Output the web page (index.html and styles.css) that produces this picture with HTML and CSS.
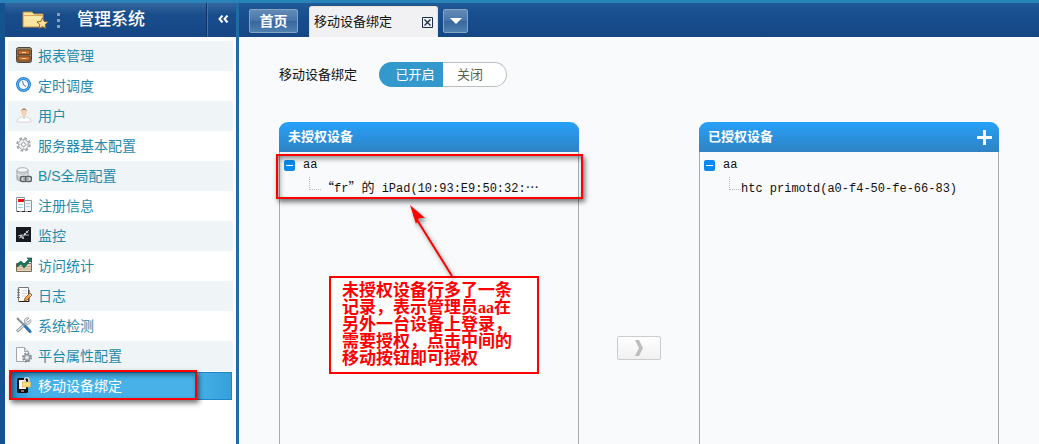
FILE: index.html
```html
<!DOCTYPE html>
<html lang="zh-CN">
<head>
<meta charset="utf-8">
<title>管理系统</title>
<link rel="stylesheet" href="styles.css">
</head>
<body>
<div class="app">
  <aside class="sidebar">
    <header class="brand">
      <svg class="brand-icon" width="28" height="20" viewBox="0 0 28 20" aria-hidden="true">
        <path d="M1 17V2h9l2 2h9v13z" fill="#f8e49c" stroke="#c0894a"/>
        <path d="M1.500 5.500H20.500" stroke="#d9a75c"/>
        <path d="M3 8H19" stroke="#fff3c4"/>
        <path d="M20.500 8l1.700 3.400 3.800.5-2.800 2.700.7 3.900-3.400-1.900-3.400 1.900.7-3.900-2.800-2.700 3.800-.5z" fill="#ffdf93" stroke="#87683b"/>
      </svg>
      <svg class="brand-dots" width="3" height="16" viewBox="0 0 3 16" aria-hidden="true"><path d="M0 1h3v3H0zM0 7h3v3H0zM0 13h3v3H0z" fill="#8d9cb6"/></svg>
      <h1 class="brand-title">管理系统</h1>
      <button class="collapse" type="button" aria-label="收起">
        <svg width="11" height="8" viewBox="0 0 11 8"><path d="M4.500.5L1.500 4l3 3.500M9.500.5L6.500 4l3 3.500" fill="none" stroke="#fff" stroke-width="2"/></svg>
      </button>
    </header>
    <nav class="menu">
      <a class="item" href="#"><svg class="icon" viewBox="0 0 16 16"><rect x=".5" y=".5" width="15" height="15" rx="2" fill="#a08a6c" stroke="#4e4439"/><path d="M2 3h12v4.500H2zM2 9h12v5H2z" fill="#c3702f" stroke="#663d21"/><path d="M6 5.500h4M6 11.500h4" stroke="#f0cf90"/></svg>报表管理</a>
      <a class="item" href="#"><svg class="icon" viewBox="0 0 16 16"><circle cx="7.500" cy="7.500" r="6" fill="#f4faff" stroke="#2683d6" stroke-width="3"/><circle cx="7.500" cy="7.500" r="6" fill="none" stroke="#70bbf3" stroke-width="1"/><path d="M6.500 4l1 4 2.500 1.500" fill="none" stroke="#678"/></svg>定时调度</a>
      <a class="item" href="#"><svg class="icon" viewBox="0 0 16 16"><path d="M1 15c0-3 2-4.500 5-5h4c3 .5 5 2 5 5z" fill="#fff" stroke="#d7d7db"/><ellipse cx="8" cy="5.500" rx="2.700" ry="4" fill="#f2d3b5"/><path d="M5 5C5 0 11 0 11 5L10 3H6z" fill="#a98e78"/><path d="M8 10v2" stroke="#d9b9a2"/></svg>用户</a>
      <a class="item" href="#"><svg class="icon" viewBox="0 0 16 16"><circle cx="7.500" cy="7.500" r="6.300" fill="none" stroke="#a3a8ae" stroke-width="2" stroke-dasharray="2.800 2.140"/><circle cx="7.500" cy="7.500" r="5" fill="#f4f5f6" stroke="#a3a8ae"/><circle cx="7.500" cy="7.500" r="2" fill="#fff" stroke="#969ba1"/><path d="M7.500 3v1.500M7.500 10.500V12M3 7.500h1.500M10.500 7.500H12" stroke="#bbb"/></svg>服务器基本配置</a>
      <a class="item" href="#"><svg class="icon" viewBox="0 0 16 16"><path d="M1 3v9c0 1.500 3 2 5.500 2s5.500-1 5.500-2V3" fill="#c9cdd1" stroke="#969ba0"/><ellipse cx="6.500" cy="3" rx="5.500" ry="2.300" fill="#f5f6f7" stroke="#aaafb3"/><path d="M1 7c2 2 9 2 11 0" fill="none" stroke="#eff2f4"/><rect x="4.500" y="9.500" width="6" height="5" rx="2" fill="#ddd" stroke="#5d6468" stroke-width="1.500"/><rect x="9.500" y="9.500" width="6" height="5" rx="2" fill="#ddd" stroke="#5d6468" stroke-width="1.500"/><path d="M7 12h6" stroke="#777"/></svg>B/S全局配置</a>
      <a class="item" href="#"><svg class="icon" viewBox="0 0 16 16"><path d="M8.500 3.500h7v11h-7z" fill="#eef3f7" stroke="#8b969e"/><path d="M.5.5h8v14h-8z" fill="#fff" stroke="#8b969e"/><path d="M2 2h6v3H2z" fill="#f2140c"/><path d="M2 7.500h5M2 10.500h5M10 6.500h4M10 9.500h4" stroke="#b5cbd8"/><path d="M1 14.500h2M6 14.500h3M12 14.500h3" stroke="#222"/></svg>注册信息</a>
      <a class="item" href="#"><svg class="icon" viewBox="0 0 16 16"><rect width="15" height="15" fill="#161a20"/><path d="M2 9l3-1 3 0 5-5M3 11l3-1 3-2 4 0" fill="none" stroke="#aab0b6"/><path d="M4 9h2M8 7h2M10 5h2M6 11h2" stroke="#dfe3e6" stroke-width="1.500"/></svg>监控</a>
      <a class="item" href="#"><svg class="icon" viewBox="0 0 16 16"><path d="M.5 6.500h15v8H.5z" fill="#e5d5bd" stroke="#7d6a56"/><path d="M1 12h14M1 9.500h14" stroke="#bfa98c"/><path d="M1 10V7l4-3 3 3 5-5-2-1h5v5l-2-2-6 7-3-4z" fill="#187a60" stroke="#1b5745" stroke-width=".7"/></svg>访问统计</a>
      <a class="item" href="#"><svg class="icon" viewBox="0 0 16 16"><path d="M2.500.5h10v14h-10z" fill="#fff" stroke="#777"/><path d="M3 14.500h10V3" fill="none" stroke="#222"/><path d="M1 3h3M1 5.500h3M1 8h3M1 10.500h3" stroke="#777"/><path d="M6 4h5M6 6.500h5M6 9h4" stroke="#cfd3d6"/><path d="M8 14l1-3 5-5 2 2-5 5z" fill="#efa54a" stroke="#8b4c22" stroke-width=".8"/><path d="M13 7l2 2" stroke="#f8dcc0"/></svg>日志</a>
      <a class="item" href="#"><svg class="icon" viewBox="0 0 16 16"><path d="M1 14.500L10 6" stroke="#7f8990" stroke-width="3"/><path d="M1.500 14L10 6" stroke="#e7ebed" stroke-width="1.200"/><path d="M14.500 2.500L12 5l-1.500-1.500L13 1c-3-1-5 1-4.500 4L10 7c3 1 6-1 4.500-4.500z" fill="#e0e4e6" stroke="#8b949a" stroke-width=".8"/><path d="M1 1l8 8" stroke="#868e95" stroke-width="2"/><path d="M9.500 9.500l4.500 5" stroke="#2474ba" stroke-width="3" stroke-linecap="round"/></svg>系统检测</a>
      <a class="item" href="#"><svg class="icon" viewBox="0 0 16 16"><path d="M.5.500h8l4 4v10H.5z" fill="#fafbfc" stroke="#a2a7ab"/><path d="M8.500.5v4h4" fill="#ddd" stroke="#a2a7ab"/><circle cx="11" cy="10.500" r="4" fill="none" stroke="#858d94" stroke-width="2" stroke-dasharray="1.800 1.340"/><circle cx="11" cy="10.500" r="3" fill="#c7ccd1" stroke="#7f878e"/><circle cx="11" cy="10.500" r="1" fill="#fff"/></svg>平台属性配置</a>
      <a class="item item-active" href="#" aria-current="page"><svg class="icon" viewBox="0 0 16 16"><rect x="1" y="1" width="11" height="15" rx="1.500" fill="#111"/><path d="M3 3h7v9H3z" fill="#f5f8fb"/><path d="M5 14h3" stroke="#ddd"/><path d="M8.500 6V3c0-3.300 4.500-3.300 4.500 0v3" fill="none" stroke="#dce0e3" stroke-width="1.500"/><rect x="6.500" y="5" width="8" height="5" fill="#fbdc80" stroke="#d8b458" stroke-width=".7"/></svg>移动设备绑定<span class="mark mark-item"></span></a>
    </nav>
  </aside>

  <main class="main">
    <div class="tabs">
      <button class="tab-home" type="button">首页</button>
      <div class="tab">
        <span>移动设备绑定</span>
        <button class="tab-close" type="button" aria-label="关闭标签">
          <svg width="11" height="11" viewBox="0 0 11 11"><path d="M.5.5h10v10H.5z" fill="none" stroke="#1d2b45"/><path d="M2.500 2.500l6 6M8.500 2.500l-6 6" stroke="#1d2b45" stroke-width="1.300"/></svg>
        </button>
      </div>
      <button class="tab-more" type="button" aria-label="更多标签">
        <svg width="12" height="6" viewBox="0 0 12 6"><path d="M0 0h12L6 6z" fill="#fff"/></svg>
      </button>
    </div>

    <div class="content">
      <div class="setting">
        <span id="bind-label">移动设备绑定</span>
        <div class="switch" role="group" aria-labelledby="bind-label">
          <button class="switch-on" type="button" aria-pressed="true">已开启</button>
          <button class="switch-off" type="button" aria-pressed="false">关闭</button>
        </div>
      </div>

      <div class="columns">
        <section class="panel">
          <header class="panel-head"><h2 class="panel-title">未授权设备</h2></header>
          <div class="tree">
            <div class="node"><button class="fold" type="button" aria-label="折叠"></button>aa</div>
            <div class="leaf"><span class="branch"></span><span><span class="wide">“</span>fr<span class="wide">”的</span> iPad(10:93:E9:50:32:<span class="wide">…</span></span></div>
          </div>
          <span class="mark mark-tree"></span>
          <div class="note">未授权设备行多了一条<br>记录，表示管理员<span class="note-latin">aa</span>在<br>另外一台设备上登录，<br>需要授权，点击中间的<br>移动按钮即可授权</div>
          <svg class="arrow" width="60" height="80" viewBox="0 0 60 80" aria-hidden="true"><path d="M11 15L49 76" stroke="#f00" stroke-width="2"/><path d="M7 5l15 13-6 0-3 6z" fill="#f00"/></svg>
        </section>

        <div class="transfer">
          <button class="move" type="button" aria-label="授权">
            <svg width="9" height="16" viewBox="0 0 9 16"><path d="M0 0h4l4 8-4 8H0l4-8z" fill="#bdbdbd"/></svg>
          </button>
        </div>

        <section class="panel">
          <header class="panel-head">
            <h2 class="panel-title">已授权设备</h2>
            <button class="add" type="button" aria-label="添加设备">
              <svg width="15" height="15" viewBox="0 0 15 15"><path d="M6 0h3v6h6v3H9v6H6V9H0V6h6z" fill="#fff"/></svg>
            </button>
          </header>
          <div class="tree">
            <div class="node"><button class="fold" type="button" aria-label="折叠"></button>aa</div>
            <div class="leaf"><span class="branch"></span>htc primotd(a0-f4-50-fe-66-83)</div>
          </div>
        </section>
      </div>
    </div>
  </main>
</div>
</body>
</html>
```
FILE: styles.css
```css
* { box-sizing: border-box; }

body {
  margin: 0;
  font: 13px/16px "Liberation Sans", "Noto Sans CJK SC", sans-serif;
  color: #111;
  background: #f9fafc;
}

button {
  padding: 0;
  border: 0;
  background: none;
  font: inherit;
  color: inherit;
}

button svg { display: block; }

.app {
  display: flex;
  min-height: 100vh;
  border-top: 3px solid #2a83b8;
}

/* Sidebar */
.sidebar {
  display: flex;
  flex-direction: column;
  flex: 0 0 239px;
  border-left: 5px solid #15538f;
  border-right: 3px solid #206ca4;
  background: #fff;
}

.brand {
  display: flex;
  align-items: center;
  height: 34px;
  padding-left: 17px;
  background: linear-gradient(#34679f, #184d8c 35%, #164684);
  color: #fff;
}

.brand-dots { margin: 0 17px 0 7px; }

.brand-title {
  flex: 1;
  margin: 0;
  font-size: 17px;
  font-weight: 500;
  line-height: 24px;
}

.collapse {
  display: grid;
  place-items: center;
  width: 30px;
  height: 34px;
  padding-left: 4px;
  padding-bottom: 3px;
  border-left: 1px solid #0c3566;
  box-shadow: inset 1px 0 #47739f;
}

.menu { padding: 4px 3px; }

.item {
  position: relative;
  display: flex;
  align-items: center;
  gap: 6px;
  height: 30px;
  padding-left: 8px;
  font-size: 14px;
  color: #248aac;
  text-decoration: none;
}

.item:nth-child(odd) { background: #eff4f7; }

.icon {
  width: 16px;
  height: 16px;
  margin-bottom: 2px;
}

.item.item-active {
  height: 28px;
  margin: 1px 1px 0;
  padding-left: 6px;
  border: 1px solid #1b87cb;
  background: linear-gradient(90deg, #248ed0, #47b1e8 10%, #47b1e8 85%, #359fda);
  color: #fff;
}

/* Red highlights */
.mark {
  position: absolute;
  border: 2px solid #f00;
  box-shadow: 2px 3px 5px rgba(0, 0, 0, .55), inset 2px 3px 5px rgba(0, 0, 0, .4);
}

.mark-item { inset: -3px 34px -1px -1px; }
.mark-tree { inset: 32px -5px auto -4px; height: 45px; }

/* Tabs */
.main {
  display: flex;
  flex-direction: column;
  flex: 1;
  min-width: 0;
}

.tabs {
  display: flex;
  align-items: center;
  height: 34px;
  padding: 2px 0 0 10px;
  background: linear-gradient(#1f5996, #184e8e 40%, #164684);
}

.tab-home,
.tab-more {
  height: 24px;
  border: 1px solid #86a3c5;
  border-radius: 2px;
  background: linear-gradient(#648bb8, #4774a8 50%, #37679f 51%, #517fae);
  color: #fff;
}

.tab-home {
  width: 49px;
  font-size: 14px;
  font-weight: 700;
}

.tab {
  display: flex;
  align-items: center;
  justify-content: space-between;
  align-self: flex-end;
  width: 129px;
  height: 31px;
  margin: 0 5px 0 11px;
  padding: 0 4px;
  border: 1px solid #e8e3d3;
  border-bottom: 0;
  border-radius: 3px 3px 0 0;
  background: #f1f1f3;
}

.tab-more {
  display: grid;
  place-items: center;
  width: 25px;
}

/* Content */
.content {
  display: flex;
  flex-direction: column;
  flex: 1;
  padding: 25px 40px 0;
}

.setting {
  display: flex;
  align-items: center;
  gap: 22px;
  margin-bottom: 35px;
}

.switch {
  display: grid;
  grid-template-columns: 1fr 1fr;
  width: 128px;
  height: 25px;
}

.switch-on {
  padding-left: 8px;
  border-radius: 13px 0 0 13px;
  background: #3398cc;
  color: #fff;
}

.switch-off {
  padding-right: 9px;
  border: 1px solid #babec0;
  border-left: 0;
  border-radius: 0 13px 13px 0;
  background: #fff;
  color: #56624a;
}

.columns {
  display: flex;
  flex: 1;
}

.panel {
  position: relative;
  flex: 0 1 300px;
  border: solid #a5adb0;
  border-width: 0 1px;
  border-radius: 9px 9px 0 0;
}

.panel-head {
  display: flex;
  align-items: center;
  justify-content: space-between;
  height: 30px;
  margin: 0 -1px;
  padding: 0 7px 0 9px;
  border-radius: 9px 9px 0 0;
  background: linear-gradient(#27a1fb, #2f82c3);
  color: #fff;
}

.panel-title {
  margin: 0;
  font-size: 13px;
  font-weight: 700;
}

.tree {
  padding: 1px 4px;
  font: 12px/24px "Liberation Mono", "Noto Sans CJK SC", monospace;
  white-space: nowrap;
}

.wide { font: 13px/16px "Noto Sans CJK SC", sans-serif; }

.node {
  display: flex;
  align-items: center;
  gap: 8px;
  height: 24px;
}

.fold {
  display: grid;
  place-items: center;
  width: 11px;
  height: 11px;
  border-radius: 2px;
  background: #078af0;
}

.fold::after {
  content: "";
  width: 7px;
  height: 1px;
  background: #fff;
}

.leaf {
  display: flex;
  height: 24px;
  padding-left: 25px;
}

.branch {
  width: 12px;
  height: 13px;
  border: dotted #bbb;
  border-width: 0 0 1px 1px;
}

.transfer {
  flex: 0 0 120px;
  padding-top: 214px;
  text-align: center;
}

.move {
  display: inline-grid;
  place-items: center;
  width: 44px;
  height: 24px;
  border: 1px solid #ccc;
  border-radius: 2px;
  background: linear-gradient(#fff, #f0f0f0);
}

/* Callout over the left panel */
.note {
  position: absolute;
  top: 154px;
  left: 49px;
  padding: 4px 25px 5px 11px;
  border: 2px solid #f00;
  background: #fff;
  color: #f00;
  font-size: 17px;
  font-weight: 700;
  line-height: 17px;
  white-space: nowrap;
}

.note-latin { font: 700 16px/16px "Liberation Serif", serif; }

.arrow {
  position: absolute;
  top: 78px;
  left: 123px;
  filter: drop-shadow(2px 3px 2px rgba(0, 0, 0, .45));
}
```
